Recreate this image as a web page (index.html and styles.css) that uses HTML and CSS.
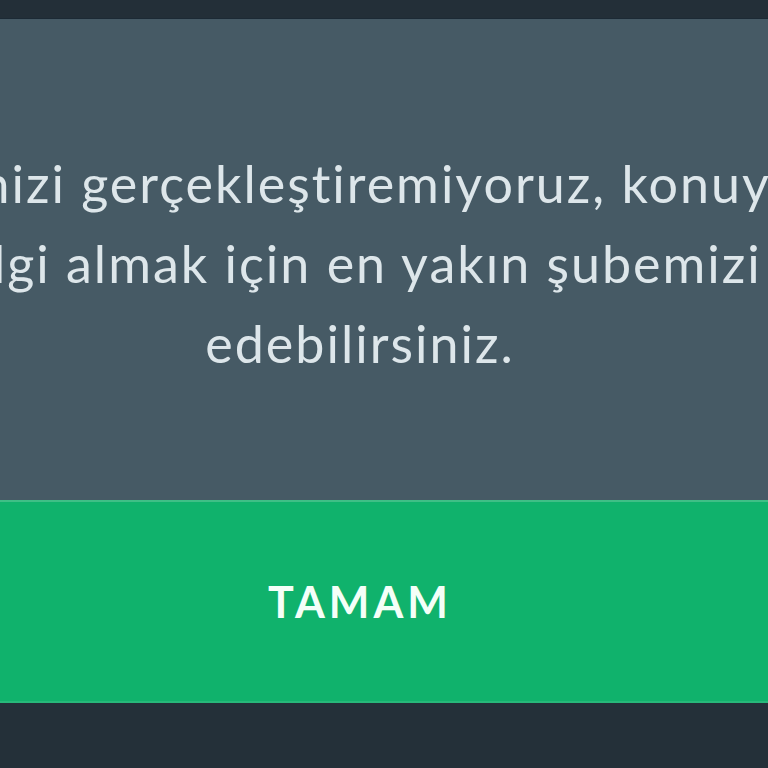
FILE: index.html
```html
<!DOCTYPE html>
<html lang="tr">
<head>
<meta charset="utf-8">
<link rel="stylesheet" href="styles.css">
</head>
<body>
<div class="topbar"></div>
<div class="dialog">
  <div class="message">
    <div class="line line-first">İşleminizi gerçekleştiremiyoruz, konuyla</div>
    <div class="line line-second">ilgili bilgi almak için en yakın şubemizi ziyaret</div>
    <div class="line">edebilirsiniz.</div>
  </div>
  <div class="button">TAMAM</div>
</div>
</body>
</html>
```
FILE: styles.css
```css
html, body {
  margin: 0;
  padding: 0;
  width: 768px;
  height: 768px;
  overflow: hidden;
  background: #243039;
}
.topbar {
  height: 18px;
  background: #232f38;
  border-bottom: 1px solid #1c2a35;
}
.dialog {
  width: 1200px;
  margin-left: -240px;
  font-family: "Lato", "Liberation Sans", sans-serif;
}
.message {
  box-sizing: border-box;
  height: 481px;
  padding-top: 124px;
  background: #465a65;
  color: #dde6ea;
  text-align: center;
  font-size: 52px;
  line-height: 80px;
  letter-spacing: 2px;
  white-space: nowrap;
}
.line-first {
  padding-right: 70px;
}
.line-second {
  padding-left: 54px;
}
.button {
  box-sizing: border-box;
  height: 203px;
  background: #10b26c;
  border-top: 2px solid #3fbf86;
  border-bottom: 2px solid #27b87a;
  display: flex;
  align-items: center;
  justify-content: center;
  color: #f4fff8;
  font-weight: 700;
  font-size: 43px;
  letter-spacing: 4px;
}
```
